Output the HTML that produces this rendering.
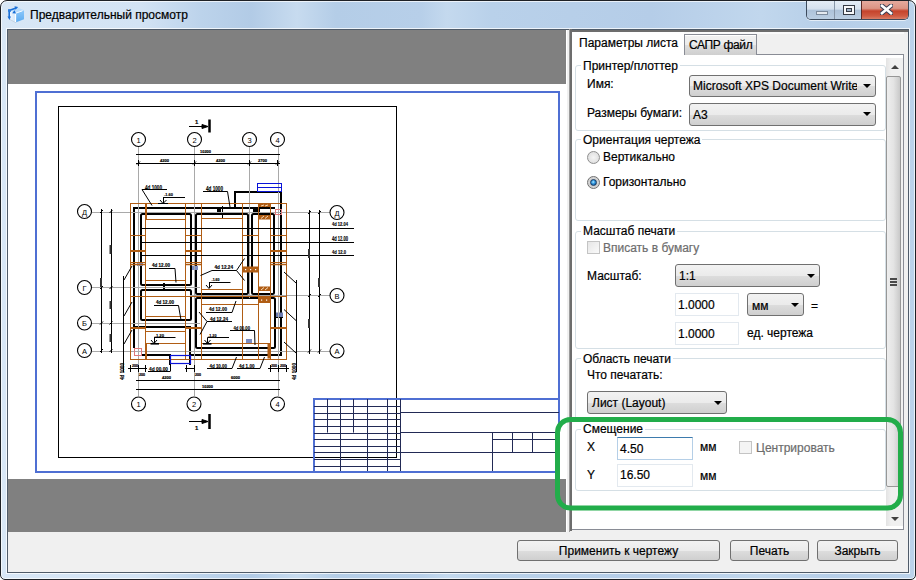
<!DOCTYPE html>
<html><head><meta charset="utf-8">
<style>
*{box-sizing:border-box;margin:0;padding:0}
html,body{width:916px;height:580px;overflow:hidden;background:#fff}
body{font-family:"Liberation Sans",sans-serif;font-size:12px;color:#000;position:relative}
.abs{position:absolute}
#win{position:absolute;left:0;top:0;width:916px;height:580px;border:1px solid #1e2126;border-radius:7px 7px 5px 5px;box-shadow:inset 0 0 0 1px rgba(255,255,255,0.7);
 background:linear-gradient(90deg,#d8e7f6 0px,#d3e3f4 140px,#bcd3eb 200px,#b2cbe6 250px,#c7dbef 296px,#b4cde7 335px,#b7cfe9 420px,#c4d9ee 446px,#b9d1ea 490px,#b5cde8 650px,#c1d7ed 760px,#b6cee8 830px,#bcd3eb 916px);overflow:hidden}
#client{position:absolute;left:7px;top:29px;width:902px;height:544px;border:1px solid #4f5b69;background:#f0f0f0;box-shadow:0 0 0 1px rgba(255,255,255,0.75)}
.title{position:absolute;left:29px;top:7px;font-size:12px;color:#000;letter-spacing:0;-webkit-text-stroke:0.2px #000;white-space:nowrap}
.t{position:absolute;white-space:nowrap;line-height:14px;-webkit-text-stroke:0.2px currentColor}
.combo{position:absolute;border:1px solid #707070;border-radius:3px;background:linear-gradient(#f2f2f2 0%,#ebebeb 50%,#dddddd 51%,#cfcfcf 100%)}
.combo .arr{position:absolute;right:4px;top:8px;width:0;height:0;border-left:4px solid transparent;border-right:4px solid transparent;border-top:4px solid #000}
.edit{position:absolute;background:#fff;border:1px solid #abadb3;border-top-color:#abadb3}
.grp{position:absolute;border:1px solid #d5dfe5;border-radius:3px}
.btn{position:absolute;border:1px solid #707070;border-radius:3px;background:linear-gradient(#f2f2f2 0%,#ebebeb 50%,#dddddd 51%,#cfcfcf 100%);text-align:center}
</style></head><body>
<div id="win">
 <div class="title">Предварительный просмотр</div>
 <svg class="abs" style="left:-1px;top:-1px" width="30" height="28" viewBox="0 0 30 28">
  <defs><linearGradient id="cgl" x1="0" y1="0" x2="1" y2="0"><stop offset="0" stop-color="#f2f8ff"/><stop offset="1" stop-color="#cfe6fb"/></linearGradient>
  <linearGradient id="cgr" x1="0" y1="0" x2="0" y2="1"><stop offset="0" stop-color="#8cc8fb"/><stop offset="1" stop-color="#5aa9ef"/></linearGradient></defs>
  <path d="M9.5 19 L10.5 10 L15.5 13.3 L15.5 22.5 Z" fill="url(#cgl)"/>
  <path d="M15.5 13.3 L24 10.3 L24 19.2 L15.5 22.5 Z" fill="url(#cgr)"/>
  <path d="M10.5 10 L17.5 7.5 L24 10.3 L15.5 13.3 Z" fill="#b9dcfb"/>
  <path d="M15.5 13.3 L15.5 22" stroke="#fff" stroke-width="1.3"/>
  <path d="M15.5 13.3 L22.5 10.8" stroke="#fff" stroke-width="0.9"/>
  <path d="M15.5 22.5 L9.5 19.2" stroke="#b8c4d0" stroke-width="0.6"/>
  <path d="M9.2 10.5 L16 8" stroke="#1a6fd6" stroke-width="1.6"/>
  <path d="M9.2 10.5 L9.2 17.5" stroke="#1a6fd6" stroke-width="1.6"/>
  <path d="M14.5 6.2 L18.2 7 L15.5 9.8 Z" fill="#1a6fd6"/>
  <path d="M7.5 16.5 L9.4 20 L11 16.5 Z" fill="#1a6fd6"/>
  <path d="M12.2 13.3 L14.5 10.3 L16 13.6 Z" fill="#1a6fd6"/>
  <rect x="8" y="9.2" width="3" height="2.6" fill="#2a7ee0"/>
 </svg>
 <div class="abs" style="left:805px;top:-1px;width:103px;height:20px;border:1px solid #3c4a5c;border-top:none;border-radius:0 0 5px 5px;overflow:hidden;box-shadow:0 1px 0 rgba(255,255,255,0.6)">
  <div class="abs" style="left:0;top:0;width:28px;height:20px;background:linear-gradient(#e6eef7 0%,#d5e1ee 45%,#aec3da 52%,#bccfe3 100%);border-right:1px solid #8796a8"></div>
  <div class="abs" style="left:28px;top:0;width:27px;height:20px;background:linear-gradient(#e6eef7 0%,#d5e1ee 45%,#aec3da 52%,#bccfe3 100%);border-right:1px solid #5e2a25"></div>
  <div class="abs" style="left:55px;top:0;width:48px;height:20px;background:linear-gradient(#e7ada1 0%,#dc9484 42%,#c5432c 55%,#cf5b42 80%,#dd8a75 100%)"></div>
  <div class="abs" style="left:9px;top:11px;width:12px;height:4px;background:#e4e9ef;border:1px solid #7c8a9c"></div>
  <div class="abs" style="left:36px;top:5px;width:12px;height:10px;border:1px solid #353a44;background:#f7f8fa"></div>
  <div class="abs" style="left:39px;top:8px;width:6px;height:4px;background:#9fb2c8;border:1px solid #353a44"></div>
  <svg class="abs" style="left:73px;top:4px" width="13" height="11" viewBox="0 0 13 11"><path d="M2 1.8 L11 9.2 M11 1.8 L2 9.2" stroke="#3a3d52" stroke-width="4.6" stroke-linecap="square"/><path d="M2 1.8 L11 9.2 M11 1.8 L2 9.2" stroke="#ffffff" stroke-width="2.6" stroke-linecap="square"/></svg>
 </div>
</div>
<div id="client"></div>
<!-- preview -->
<div class="abs" style="left:8px;top:30px;width:558px;height:54px;background:#808080"></div>
<div class="abs" style="left:8px;top:84px;width:558px;height:395px;background:#fff"></div>
<div class="abs" style="left:8px;top:479px;width:558px;height:53px;background:#808080"></div>
<div class="abs" style="left:35px;top:91px;width:525px;height:382px;border:2px solid #4f6fd3"></div>
<div class="abs" style="left:58px;top:106px;width:339px;height:352px;border:1px solid #000"></div>
<svg class="abs" style="left:0;top:0" width="916" height="580"><path d="M134 348 L134 208 L275 208" stroke="#000" stroke-width="2" fill="none"/>
<path d="M235 208 L235 192 L281 192 L281 355 L191 355" stroke="#000" stroke-width="2" fill="none"/>
<path d="M141 355 L170 355 L170 365" stroke="#000" stroke-width="2" fill="none"/>
<rect x="141" y="214" width="50" height="71" stroke="#000" stroke-width="2" fill="none" rx="1.5"/>
<rect x="196" y="214" width="52" height="80" stroke="#000" stroke-width="2" fill="none" rx="1.5"/>
<rect x="252" y="214" width="22" height="80" stroke="#000" stroke-width="2" fill="none" rx="1.5"/>
<rect x="141" y="290" width="50" height="30" stroke="#000" stroke-width="2" fill="none" rx="1.5"/>
<path d="M134 327 L190 327 L190 365" stroke="#000" stroke-width="2" fill="none"/>
<rect x="196" y="298" width="79" height="50" stroke="#000" stroke-width="2" fill="none" rx="1.5"/>
<rect x="217" y="209" width="4" height="6" fill="#000"/>
<line x1="222.5" y1="206" x2="222.5" y2="218" stroke="#000" stroke-width="1"/>
<rect x="253" y="209" width="7" height="3" fill="#000"/>
<rect x="163" y="283" width="2" height="7" fill="#000"/>
<line x1="160" y1="287.5" x2="168" y2="287.5" stroke="#000" stroke-width="1"/>
<rect x="276" y="312.5" width="7" height="4.5" fill="#6b7bb0"/>
<line x1="275" y1="317.5" x2="283" y2="317.5" stroke="#000" stroke-width="1"/>
<rect x="137" y="262" width="6" height="4" fill="#7b8bc0"/>
<rect x="192" y="266" width="6" height="4" fill="#7b8bc0"/>
<rect x="246" y="339" width="6" height="4" fill="#7b8bc0"/>
<line x1="138.5" y1="147" x2="138.5" y2="396" stroke="#a9a9a9" stroke-width="1"/>
<line x1="194.5" y1="147" x2="194.5" y2="396" stroke="#a9a9a9" stroke-width="1"/>
<line x1="278.5" y1="147" x2="278.5" y2="396" stroke="#a9a9a9" stroke-width="1"/>
<line x1="249.5" y1="147" x2="249.5" y2="298" stroke="#a9a9a9" stroke-width="1"/>
<line x1="92" y1="212.5" x2="330" y2="212.5" stroke="#a9a9a9" stroke-width="1"/>
<line x1="92" y1="287.5" x2="200" y2="287.5" stroke="#a9a9a9" stroke-width="1"/>
<line x1="92" y1="323.5" x2="200" y2="323.5" stroke="#a9a9a9" stroke-width="1"/>
<line x1="92" y1="351.5" x2="330" y2="351.5" stroke="#a9a9a9" stroke-width="1"/>
<line x1="190" y1="295.5" x2="330" y2="295.5" stroke="#a9a9a9" stroke-width="1"/>
<rect x="130.5" y="203.5" width="156.0" height="156.0" stroke="#b05d14" stroke-width="1" fill="none" rx="0"/>
<line x1="145.5" y1="203.5" x2="145.5" y2="359" stroke="#b05d14" stroke-width="1"/>
<line x1="185.5" y1="203.5" x2="185.5" y2="359" stroke="#b05d14" stroke-width="1"/>
<line x1="201.5" y1="203.5" x2="201.5" y2="359" stroke="#b05d14" stroke-width="1"/>
<line x1="242.5" y1="203.5" x2="242.5" y2="359" stroke="#b05d14" stroke-width="1"/>
<line x1="258.5" y1="203.5" x2="258.5" y2="359" stroke="#b05d14" stroke-width="1"/>
<line x1="270.5" y1="203.5" x2="270.5" y2="359" stroke="#b05d14" stroke-width="1"/>
<line x1="146" y1="203.5" x2="146" y2="219.5" stroke="#b05d14" stroke-width="2"/>
<line x1="145.5" y1="219.5" x2="185.5" y2="219.5" stroke="#b05d14" stroke-width="1"/>
<line x1="201.5" y1="218.5" x2="242.5" y2="218.5" stroke="#b05d14" stroke-width="1"/>
<line x1="145.5" y1="280.5" x2="185.5" y2="280.5" stroke="#b05d14" stroke-width="1"/>
<line x1="201.5" y1="289.5" x2="242.5" y2="289.5" stroke="#b05d14" stroke-width="1"/>
<line x1="130.5" y1="296.5" x2="286.5" y2="296.5" stroke="#b05d14" stroke-width="1"/>
<line x1="145.5" y1="316.5" x2="185.5" y2="316.5" stroke="#b05d14" stroke-width="1"/>
<line x1="145.5" y1="331.5" x2="185.5" y2="331.5" stroke="#b05d14" stroke-width="1"/>
<line x1="145.5" y1="343.5" x2="185.5" y2="343.5" stroke="#b05d14" stroke-width="1"/>
<line x1="201.5" y1="304.5" x2="258.5" y2="304.5" stroke="#b05d14" stroke-width="1"/>
<line x1="201.5" y1="343.5" x2="270.5" y2="343.5" stroke="#b05d14" stroke-width="1"/>
<line x1="130.5" y1="235.5" x2="145.5" y2="235.5" stroke="#b05d14" stroke-width="1"/>
<line x1="130.5" y1="251" x2="145.5" y2="251" stroke="#b05d14" stroke-width="2"/>
<line x1="130.5" y1="262.5" x2="145.5" y2="262.5" stroke="#b05d14" stroke-width="1"/>
<line x1="130.5" y1="264.5" x2="145.5" y2="264.5" stroke="#b05d14" stroke-width="1.5"/>
<line x1="130.5" y1="328" x2="145.5" y2="328" stroke="#b05d14" stroke-width="2"/>
<line x1="185.5" y1="235.5" x2="201.5" y2="235.5" stroke="#b05d14" stroke-width="1"/>
<line x1="185.5" y1="251" x2="201.5" y2="251" stroke="#b05d14" stroke-width="2"/>
<line x1="185.5" y1="262.5" x2="201.5" y2="262.5" stroke="#b05d14" stroke-width="1"/>
<line x1="185.5" y1="264.5" x2="201.5" y2="264.5" stroke="#b05d14" stroke-width="1.5"/>
<line x1="185.5" y1="328" x2="201.5" y2="328" stroke="#b05d14" stroke-width="2"/>
<line x1="270.5" y1="235.5" x2="286.5" y2="235.5" stroke="#b05d14" stroke-width="1"/>
<line x1="270.5" y1="251" x2="286.5" y2="251" stroke="#b05d14" stroke-width="2"/>
<line x1="270.5" y1="262.5" x2="286.5" y2="262.5" stroke="#b05d14" stroke-width="1"/>
<line x1="270.5" y1="264.5" x2="286.5" y2="264.5" stroke="#b05d14" stroke-width="1.5"/>
<line x1="270.5" y1="328" x2="286.5" y2="328" stroke="#b05d14" stroke-width="2"/>
<line x1="242.5" y1="235.5" x2="258.5" y2="235.5" stroke="#b05d14" stroke-width="1"/>
<rect x="243" y="266.5" width="15" height="6" fill="#b05d14"/>
<rect x="245" y="269.0" width="1.2" height="1.2" fill="#fff"/>
<rect x="250" y="269.0" width="1.2" height="1.2" fill="#fff"/>
<rect x="255" y="269.0" width="1.2" height="1.2" fill="#fff"/>
<rect x="259" y="204" width="11" height="3" fill="#b05d14"/>
<line x1="261" y1="206" x2="264" y2="205" stroke="#f4d9b8" stroke-width="1"/>
<line x1="265" y1="206" x2="268" y2="205" stroke="#f4d9b8" stroke-width="1"/>
<rect x="259" y="215" width="11" height="4.5" fill="#b05d14"/>
<line x1="261" y1="218.5" x2="264" y2="216" stroke="#f4d9b8" stroke-width="1"/>
<line x1="265" y1="218.5" x2="268" y2="216" stroke="#f4d9b8" stroke-width="1"/>
<rect x="259" y="286.5" width="11" height="4.5" fill="#b05d14"/>
<line x1="261" y1="290.0" x2="264" y2="287.5" stroke="#f4d9b8" stroke-width="1"/>
<line x1="265" y1="290.0" x2="268" y2="287.5" stroke="#f4d9b8" stroke-width="1"/>
<rect x="259" y="297" width="11" height="6" fill="#b05d14"/>
<rect x="261" y="299.5" width="1.2" height="1.2" fill="#fff"/>
<rect x="266" y="299.5" width="1.2" height="1.2" fill="#fff"/>
<rect x="267.5" y="343.5" width="3" height="15" fill="#b05d14"/>
<line x1="146" y1="343.5" x2="146" y2="359" stroke="#b05d14" stroke-width="2"/>
<rect x="257.5" y="183.5" width="24.0" height="8.0" stroke="#0a14d8" stroke-width="1" fill="none" rx="0"/>
<line x1="257.5" y1="187.5" x2="281.5" y2="187.5" stroke="#0a14d8" stroke-width="1"/>
<rect x="170.5" y="355.5" width="20.0" height="8.0" stroke="#0a14d8" stroke-width="1.2" fill="none" rx="0"/>
<rect x="134.5" y="348.5" width="7.0" height="7.0" stroke="#e07a7a" stroke-width="1" fill="none" rx="0"/>
<rect x="275.5" y="209.5" width="6.0" height="5.0" stroke="#e07a7a" stroke-width="1" fill="none" rx="0"/>
<line x1="141" y1="228.5" x2="354" y2="228.5" stroke="#000" stroke-width="1"/>
<line x1="141" y1="242.5" x2="354" y2="242.5" stroke="#000" stroke-width="1"/>
<line x1="141" y1="255.5" x2="354" y2="255.5" stroke="#000" stroke-width="1"/>
<circle cx="138.5" cy="139.5" r="7" stroke="#000" stroke-width="1.1" fill="#fff"/>
<text x="138.5" y="142.5" font-size="7.5" text-anchor="middle" font-family="Liberation Sans" fill="#000">1</text>
<circle cx="194.5" cy="139.5" r="7" stroke="#000" stroke-width="1.1" fill="#fff"/>
<text x="194.5" y="142.5" font-size="7.5" text-anchor="middle" font-family="Liberation Sans" fill="#000">2</text>
<circle cx="249.5" cy="139.5" r="7" stroke="#000" stroke-width="1.1" fill="#fff"/>
<text x="249.5" y="142.5" font-size="7.5" text-anchor="middle" font-family="Liberation Sans" fill="#000">3</text>
<circle cx="277.5" cy="139.5" r="7" stroke="#000" stroke-width="1.1" fill="#fff"/>
<text x="277.5" y="142.5" font-size="7.5" text-anchor="middle" font-family="Liberation Sans" fill="#000">4</text>
<circle cx="84.5" cy="211.5" r="7" stroke="#000" stroke-width="1.1" fill="#fff"/>
<text x="84.5" y="214.5" font-size="7.5" text-anchor="middle" font-family="Liberation Sans" fill="#000">Д</text>
<circle cx="84.5" cy="287.5" r="7" stroke="#000" stroke-width="1.1" fill="#fff"/>
<text x="84.5" y="290.5" font-size="7.5" text-anchor="middle" font-family="Liberation Sans" fill="#000">Г</text>
<circle cx="84.5" cy="323" r="7" stroke="#000" stroke-width="1.1" fill="#fff"/>
<text x="84.5" y="326" font-size="7.5" text-anchor="middle" font-family="Liberation Sans" fill="#000">Б</text>
<circle cx="84.5" cy="350.5" r="7" stroke="#000" stroke-width="1.1" fill="#fff"/>
<text x="84.5" y="353.5" font-size="7.5" text-anchor="middle" font-family="Liberation Sans" fill="#000">А</text>
<circle cx="337" cy="212.5" r="7" stroke="#000" stroke-width="1.1" fill="#fff"/>
<text x="337" y="215.5" font-size="7.5" text-anchor="middle" font-family="Liberation Sans" fill="#000">Д</text>
<circle cx="337" cy="295.5" r="7" stroke="#000" stroke-width="1.1" fill="#fff"/>
<text x="337" y="298.5" font-size="7.5" text-anchor="middle" font-family="Liberation Sans" fill="#000">В</text>
<circle cx="337" cy="351" r="7" stroke="#000" stroke-width="1.1" fill="#fff"/>
<text x="337" y="354" font-size="7.5" text-anchor="middle" font-family="Liberation Sans" fill="#000">А</text>
<circle cx="138.5" cy="404" r="7" stroke="#000" stroke-width="1.1" fill="#fff"/>
<text x="138.5" y="407" font-size="7.5" text-anchor="middle" font-family="Liberation Sans" fill="#000">1</text>
<circle cx="194" cy="404" r="7" stroke="#000" stroke-width="1.1" fill="#fff"/>
<text x="194" y="407" font-size="7.5" text-anchor="middle" font-family="Liberation Sans" fill="#000">2</text>
<circle cx="277.5" cy="404" r="7" stroke="#000" stroke-width="1.1" fill="#fff"/>
<text x="277.5" y="407" font-size="7.5" text-anchor="middle" font-family="Liberation Sans" fill="#000">4</text>
<line x1="136" y1="154.5" x2="280" y2="154.5" stroke="#000" stroke-width="1"/>
<line x1="136" y1="163.5" x2="280" y2="163.5" stroke="#000" stroke-width="1"/>
<line x1="137.0" y1="164.5" x2="140.0" y2="161.5" stroke="#000" stroke-width="1"/>
<line x1="138.5" y1="160" x2="138.5" y2="166" stroke="#000" stroke-width="1"/>
<line x1="193.0" y1="164.5" x2="196.0" y2="161.5" stroke="#000" stroke-width="1"/>
<line x1="194.5" y1="160" x2="194.5" y2="166" stroke="#000" stroke-width="1"/>
<line x1="248.0" y1="164.5" x2="251.0" y2="161.5" stroke="#000" stroke-width="1"/>
<line x1="249.5" y1="160" x2="249.5" y2="166" stroke="#000" stroke-width="1"/>
<line x1="276.0" y1="164.5" x2="279.0" y2="161.5" stroke="#000" stroke-width="1"/>
<line x1="277.5" y1="160" x2="277.5" y2="166" stroke="#000" stroke-width="1"/>
<line x1="136" y1="380.5" x2="280" y2="380.5" stroke="#000" stroke-width="1"/>
<line x1="136" y1="389.5" x2="280" y2="389.5" stroke="#000" stroke-width="1"/>
<line x1="128" y1="368.5" x2="147" y2="368.5" stroke="#000" stroke-width="1"/>
<line x1="185" y1="368.5" x2="195" y2="368.5" stroke="#000" stroke-width="1"/>
<line x1="268" y1="368.5" x2="289" y2="368.5" stroke="#000" stroke-width="1"/>
<line x1="130.5" y1="365" x2="130.5" y2="372" stroke="#000" stroke-width="1"/>
<line x1="138.5" y1="365" x2="138.5" y2="372" stroke="#000" stroke-width="1"/>
<line x1="145.5" y1="365" x2="145.5" y2="372" stroke="#000" stroke-width="1"/>
<line x1="186.5" y1="365" x2="186.5" y2="372" stroke="#000" stroke-width="1"/>
<line x1="194.5" y1="365" x2="194.5" y2="372" stroke="#000" stroke-width="1"/>
<line x1="270.5" y1="365" x2="270.5" y2="372" stroke="#000" stroke-width="1"/>
<line x1="278.5" y1="365" x2="278.5" y2="372" stroke="#000" stroke-width="1"/>
<line x1="286.5" y1="365" x2="286.5" y2="372" stroke="#000" stroke-width="1"/>
<line x1="101.5" y1="209" x2="101.5" y2="353" stroke="#000" stroke-width="1"/>
<line x1="111.5" y1="209" x2="111.5" y2="353" stroke="#000" stroke-width="1"/>
<line x1="309.5" y1="210" x2="309.5" y2="354" stroke="#000" stroke-width="1"/>
<line x1="319.5" y1="210" x2="319.5" y2="354" stroke="#000" stroke-width="1"/>
<line x1="109.5" y1="213.0" x2="112.5" y2="210.0" stroke="#000" stroke-width="1"/>
<line x1="100" y1="213.0" x2="103" y2="210.0" stroke="#000" stroke-width="1"/>
<line x1="109.5" y1="289.0" x2="112.5" y2="286.0" stroke="#000" stroke-width="1"/>
<line x1="100" y1="289.0" x2="103" y2="286.0" stroke="#000" stroke-width="1"/>
<line x1="109.5" y1="324.5" x2="112.5" y2="321.5" stroke="#000" stroke-width="1"/>
<line x1="100" y1="324.5" x2="103" y2="321.5" stroke="#000" stroke-width="1"/>
<line x1="109.5" y1="352.0" x2="112.5" y2="349.0" stroke="#000" stroke-width="1"/>
<line x1="100" y1="352.0" x2="103" y2="349.0" stroke="#000" stroke-width="1"/>
<line x1="308" y1="214.0" x2="311" y2="211.0" stroke="#000" stroke-width="1"/>
<line x1="318" y1="214.0" x2="321" y2="211.0" stroke="#000" stroke-width="1"/>
<line x1="308" y1="297.0" x2="311" y2="294.0" stroke="#000" stroke-width="1"/>
<line x1="318" y1="297.0" x2="321" y2="294.0" stroke="#000" stroke-width="1"/>
<line x1="308" y1="352.5" x2="311" y2="349.5" stroke="#000" stroke-width="1"/>
<line x1="318" y1="352.5" x2="321" y2="349.5" stroke="#000" stroke-width="1"/>
<rect x="109.5" y="245" width="2" height="9" fill="#333"/>
<rect x="100" y="278" width="2" height="9" fill="#333"/>
<rect x="109.5" y="301" width="2" height="8" fill="#333"/>
<rect x="109.5" y="334" width="2" height="8" fill="#333"/>
<rect x="308" y="249" width="2" height="9" fill="#333"/>
<rect x="318" y="278" width="2" height="9" fill="#333"/>
<rect x="308" y="319" width="2" height="9" fill="#333"/>
<text x="200" y="152.5" font-size="3.6" font-weight="bold" text-anchor="start" font-family="Liberation Sans" fill="#000" stroke="#000" stroke-width="0.15" textLength="11" lengthAdjust="spacingAndGlyphs">10200</text>
<text x="160" y="161.5" font-size="3.6" font-weight="bold" text-anchor="start" font-family="Liberation Sans" fill="#000" stroke="#000" stroke-width="0.15" textLength="9" lengthAdjust="spacingAndGlyphs">4200</text>
<text x="216" y="161.5" font-size="3.6" font-weight="bold" text-anchor="start" font-family="Liberation Sans" fill="#000" stroke="#000" stroke-width="0.15" textLength="9" lengthAdjust="spacingAndGlyphs">4200</text>
<text x="258" y="161.5" font-size="3.6" font-weight="bold" text-anchor="start" font-family="Liberation Sans" fill="#000" stroke="#000" stroke-width="0.15" textLength="9" lengthAdjust="spacingAndGlyphs">2700</text>
<text x="162" y="379" font-size="3.6" font-weight="bold" text-anchor="start" font-family="Liberation Sans" fill="#000" stroke="#000" stroke-width="0.15" textLength="9" lengthAdjust="spacingAndGlyphs">4200</text>
<text x="231" y="379" font-size="3.6" font-weight="bold" text-anchor="start" font-family="Liberation Sans" fill="#000" stroke="#000" stroke-width="0.15" textLength="9" lengthAdjust="spacingAndGlyphs">6000</text>
<text x="202" y="388" font-size="3.6" font-weight="bold" text-anchor="start" font-family="Liberation Sans" fill="#000" stroke="#000" stroke-width="0.15" textLength="11" lengthAdjust="spacingAndGlyphs">10200</text>
<text x="132" y="367" font-size="3.2" font-weight="bold" text-anchor="start" font-family="Liberation Sans" fill="#000" stroke="#000" stroke-width="0.15" textLength="6" lengthAdjust="spacingAndGlyphs">200</text>
<text x="271" y="367" font-size="3.2" font-weight="bold" text-anchor="start" font-family="Liberation Sans" fill="#000" stroke="#000" stroke-width="0.15" textLength="6" lengthAdjust="spacingAndGlyphs">200</text>
<text x="280" y="367" font-size="3.2" font-weight="bold" text-anchor="start" font-family="Liberation Sans" fill="#000" stroke="#000" stroke-width="0.15" textLength="6" lengthAdjust="spacingAndGlyphs">200</text>
<text x="139" y="376" font-size="3.2" font-weight="bold" text-anchor="start" font-family="Liberation Sans" fill="#000" stroke="#000" stroke-width="0.15" textLength="6" lengthAdjust="spacingAndGlyphs">200</text>
<text x="195" y="376" font-size="3.2" font-weight="bold" text-anchor="start" font-family="Liberation Sans" fill="#000" stroke="#000" stroke-width="0.15" textLength="6" lengthAdjust="spacingAndGlyphs">200</text>
<text x="145" y="189.5" font-size="7.25" font-weight="bold" text-anchor="start" font-family="Liberation Sans" fill="#000" stroke="#000" stroke-width="0.15" textLength="17" lengthAdjust="spacingAndGlyphs">4d 1000</text>
<line x1="142" y1="189.5" x2="167" y2="189.5" stroke="#000" stroke-width="1"/>
<line x1="142" y1="189.5" x2="152" y2="205.5" stroke="#000" stroke-width="1"/>
<text x="164" y="196" font-size="4.35" font-weight="bold" text-anchor="start" font-family="Liberation Sans" fill="#000" stroke="#000" stroke-width="0.15" textLength="9" lengthAdjust="spacingAndGlyphs">-1.60</text>
<line x1="163" y1="197.5" x2="185" y2="197.5" stroke="#000" stroke-width="1"/>
<line x1="163.5" y1="197.5" x2="163.5" y2="203.5" stroke="#000" stroke-width="1"/>
<path d="M160 200 L163 203.5 L166.5 200" stroke="#000" stroke-width="1" fill="none"/>
<line x1="158" y1="203.5" x2="168" y2="203.5" stroke="#000" stroke-width="1"/>
<text x="206" y="191.2" font-size="6.8149999999999835" font-weight="bold" text-anchor="start" font-family="Liberation Sans" fill="#000" stroke="#000" stroke-width="0.15" textLength="17" lengthAdjust="spacingAndGlyphs">4d 1000</text>
<line x1="203" y1="191.5" x2="227.5" y2="191.5" stroke="#000" stroke-width="1"/>
<line x1="227.5" y1="191.5" x2="230" y2="207" stroke="#000" stroke-width="1"/>
<text x="152" y="267" font-size="5.075" font-weight="bold" text-anchor="start" font-family="Liberation Sans" fill="#000" stroke="#000" stroke-width="0.15" textLength="18" lengthAdjust="spacingAndGlyphs">4d 12.00</text>
<line x1="149" y1="268.5" x2="175" y2="268.5" stroke="#000" stroke-width="1"/>
<line x1="175" y1="268.5" x2="176" y2="282.5" stroke="#000" stroke-width="1"/>
<text x="214.5" y="269" font-size="5.075" font-weight="bold" text-anchor="start" font-family="Liberation Sans" fill="#000" stroke="#000" stroke-width="0.15" textLength="18.5" lengthAdjust="spacingAndGlyphs">4d 12.24</text>
<line x1="212" y1="270.5" x2="236.5" y2="270.5" stroke="#000" stroke-width="1"/>
<line x1="236.5" y1="270.5" x2="244.5" y2="258.5" stroke="#000" stroke-width="1"/>
<line x1="236.5" y1="270.5" x2="244.5" y2="280.5" stroke="#000" stroke-width="1"/>
<line x1="212" y1="270.5" x2="200.5" y2="275.5" stroke="#000" stroke-width="1"/>
<text x="211.5" y="281" font-size="3.625" font-weight="bold" text-anchor="start" font-family="Liberation Sans" fill="#000" stroke="#000" stroke-width="0.15" textLength="8.0" lengthAdjust="spacingAndGlyphs">-1.60</text>
<line x1="209" y1="282.5" x2="230.5" y2="282.5" stroke="#000" stroke-width="1"/>
<line x1="209.5" y1="282.5" x2="209.5" y2="288" stroke="#000" stroke-width="1"/>
<path d="M206 285 L209 288.5 L212 285" stroke="#000" stroke-width="1" fill="none"/>
<text x="156" y="304" font-size="5.075" font-weight="bold" text-anchor="start" font-family="Liberation Sans" fill="#000" stroke="#000" stroke-width="0.15" textLength="18" lengthAdjust="spacingAndGlyphs">4d 12.00</text>
<line x1="154" y1="305.5" x2="178.5" y2="305.5" stroke="#000" stroke-width="1"/>
<line x1="178.5" y1="305.5" x2="181" y2="320" stroke="#000" stroke-width="1"/>
<text x="209" y="310.8" font-size="5.510000000000017" font-weight="bold" text-anchor="start" font-family="Liberation Sans" fill="#000" stroke="#000" stroke-width="0.15" textLength="18" lengthAdjust="spacingAndGlyphs">4d 12.00</text>
<line x1="206" y1="312.5" x2="232" y2="312.5" stroke="#000" stroke-width="1"/>
<line x1="232" y1="312.5" x2="236" y2="301" stroke="#000" stroke-width="1"/>
<text x="210" y="320.8" font-size="5.220000000000033" font-weight="bold" text-anchor="start" font-family="Liberation Sans" fill="#000" stroke="#000" stroke-width="0.15" textLength="18" lengthAdjust="spacingAndGlyphs">4d 12.24</text>
<line x1="207" y1="321.5" x2="232" y2="321.5" stroke="#000" stroke-width="1"/>
<line x1="207" y1="321.5" x2="199" y2="312" stroke="#000" stroke-width="1"/>
<line x1="207" y1="321.5" x2="200" y2="334.5" stroke="#000" stroke-width="1"/>
<text x="233.5" y="329.5" font-size="5.8" font-weight="bold" text-anchor="start" font-family="Liberation Sans" fill="#000" stroke="#000" stroke-width="0.15" textLength="16.5" lengthAdjust="spacingAndGlyphs">4d 00.00</text>
<line x1="230" y1="330.5" x2="254.5" y2="330.5" stroke="#000" stroke-width="1"/>
<line x1="254.5" y1="330.5" x2="255" y2="345" stroke="#000" stroke-width="1"/>
<text x="154.5" y="336.5" font-size="4.35" font-weight="bold" text-anchor="start" font-family="Liberation Sans" fill="#000" stroke="#000" stroke-width="0.15" textLength="9.5" lengthAdjust="spacingAndGlyphs">-1.20</text>
<line x1="154" y1="337.5" x2="175.5" y2="337.5" stroke="#000" stroke-width="1"/>
<line x1="154.5" y1="337.5" x2="154.5" y2="343.5" stroke="#000" stroke-width="1"/>
<line x1="150.5" y1="343.8" x2="159" y2="343.8" stroke="#000" stroke-width="1.6"/>
<path d="M151 340 L154 343.5 L157 340" stroke="#000" stroke-width="1" fill="none"/>
<text x="208" y="336.5" font-size="4.35" font-weight="bold" text-anchor="start" font-family="Liberation Sans" fill="#000" stroke="#000" stroke-width="0.15" textLength="8.5" lengthAdjust="spacingAndGlyphs">-1.20</text>
<line x1="207.5" y1="337.5" x2="229" y2="337.5" stroke="#000" stroke-width="1"/>
<line x1="207.5" y1="337.5" x2="207.5" y2="343.5" stroke="#000" stroke-width="1"/>
<line x1="203" y1="343.8" x2="211.5" y2="343.8" stroke="#000" stroke-width="1.6"/>
<path d="M204.5 340 L207.5 343.5 L210.5 340" stroke="#000" stroke-width="1" fill="none"/>
<text x="149" y="370.5" font-size="5.8" font-weight="bold" text-anchor="start" font-family="Liberation Sans" fill="#000" stroke="#000" stroke-width="0.15" textLength="19" lengthAdjust="spacingAndGlyphs">4d 00.00</text>
<line x1="148" y1="371.5" x2="170" y2="371.5" stroke="#000" stroke-width="1"/>
<line x1="170.5" y1="371.5" x2="170.5" y2="364" stroke="#000" stroke-width="1"/>
<text x="209.5" y="367.6" font-size="5.945000000000033" font-weight="bold" text-anchor="start" font-family="Liberation Sans" fill="#000" stroke="#000" stroke-width="0.15" textLength="17.5" lengthAdjust="spacingAndGlyphs">4d 10.00</text>
<line x1="207" y1="368.5" x2="232" y2="368.5" stroke="#000" stroke-width="1"/>
<line x1="232" y1="368.5" x2="236.5" y2="357" stroke="#000" stroke-width="1"/>
<text x="239" y="367.6" font-size="5.945000000000033" font-weight="bold" text-anchor="start" font-family="Liberation Sans" fill="#000" stroke="#000" stroke-width="0.15" textLength="15.5" lengthAdjust="spacingAndGlyphs">4d 1.00</text>
<line x1="237" y1="368.5" x2="260" y2="368.5" stroke="#000" stroke-width="1"/>
<line x1="260" y1="368.5" x2="264.5" y2="357" stroke="#000" stroke-width="1"/>
<text x="332" y="226" font-size="5.8" font-weight="bold" text-anchor="start" font-family="Liberation Sans" fill="#000" stroke="#000" stroke-width="0.15" textLength="16" lengthAdjust="spacingAndGlyphs">4d 12.04</text>
<text x="332" y="240.5" font-size="6.5249999999999995" font-weight="bold" text-anchor="start" font-family="Liberation Sans" fill="#000" stroke="#000" stroke-width="0.15" textLength="16" lengthAdjust="spacingAndGlyphs">4d 12.00</text>
<text x="332" y="254" font-size="5.8" font-weight="bold" text-anchor="start" font-family="Liberation Sans" fill="#000" stroke="#000" stroke-width="0.15" textLength="14" lengthAdjust="spacingAndGlyphs">4d 12.0</text>
<text x="124" y="380" font-size="5.5" font-weight="bold" text-anchor="start" font-family="Liberation Sans" fill="#000" stroke="#000" stroke-width="0.15" transform="rotate(-90 124 380)" textLength="17" lengthAdjust="spacingAndGlyphs">4d 1000</text>
<text x="296" y="380" font-size="5.5" font-weight="bold" text-anchor="start" font-family="Liberation Sans" fill="#000" stroke="#000" stroke-width="0.15" transform="rotate(-90 296 380)" textLength="17" lengthAdjust="spacingAndGlyphs">4d 1000</text>
<line x1="132" y1="266" x2="124" y2="280" stroke="#000" stroke-width="1"/>
<line x1="132" y1="302" x2="124" y2="316" stroke="#000" stroke-width="1"/>
<line x1="132" y1="330" x2="124" y2="344" stroke="#000" stroke-width="1"/>
<line x1="284" y1="272" x2="296" y2="283" stroke="#000" stroke-width="1"/>
<line x1="284" y1="309.5" x2="296" y2="320.5" stroke="#000" stroke-width="1"/>
<line x1="284" y1="342" x2="296" y2="353" stroke="#000" stroke-width="1"/>
<line x1="123.5" y1="276" x2="123.5" y2="372" stroke="#000" stroke-width="1"/>
<line x1="296.5" y1="280" x2="296.5" y2="372" stroke="#000" stroke-width="1"/>
<line x1="189" y1="126.5" x2="207" y2="126.5" stroke="#000" stroke-width="1"/>
<path d="M202 124.5 L208 126.5 L202 128.5 Z" stroke="#000" stroke-width="1" fill="#000"/>
<line x1="209.5" y1="119.5" x2="209.5" y2="132.5" stroke="#000" stroke-width="2.5"/>
<text x="195" y="124" font-size="6" font-weight="bold" text-anchor="start" font-family="Liberation Sans" fill="#000" stroke="#000" stroke-width="0.15">1</text>
<line x1="189" y1="421.5" x2="207" y2="421.5" stroke="#000" stroke-width="1"/>
<path d="M202 419.5 L208 421.5 L202 423.5 Z" stroke="#000" stroke-width="1" fill="#000"/>
<line x1="209.5" y1="414" x2="209.5" y2="429" stroke="#000" stroke-width="2.5"/>
<text x="195" y="430" font-size="6" font-weight="bold" text-anchor="start" font-family="Liberation Sans" fill="#000" stroke="#000" stroke-width="0.15">1</text>
<line x1="313" y1="399" x2="559" y2="399" stroke="#4f6fd3" stroke-width="2"/>
<line x1="314" y1="399" x2="314" y2="471" stroke="#4f6fd3" stroke-width="2"/>
<line x1="314" y1="406.5" x2="400.5" y2="406.5" stroke="#222a55" stroke-width="1"/>
<line x1="314" y1="413.5" x2="400.5" y2="413.5" stroke="#222a55" stroke-width="1"/>
<line x1="314" y1="419.5" x2="400.5" y2="419.5" stroke="#222a55" stroke-width="1"/>
<line x1="314" y1="426.5" x2="400.5" y2="426.5" stroke="#222a55" stroke-width="1"/>
<line x1="314" y1="433.5" x2="400.5" y2="433.5" stroke="#222a55" stroke-width="1"/>
<line x1="314" y1="439.5" x2="400.5" y2="439.5" stroke="#222a55" stroke-width="1"/>
<line x1="314" y1="446.5" x2="400.5" y2="446.5" stroke="#222a55" stroke-width="1"/>
<line x1="314" y1="452.5" x2="400.5" y2="452.5" stroke="#222a55" stroke-width="1"/>
<line x1="314" y1="459.5" x2="400.5" y2="459.5" stroke="#222a55" stroke-width="1"/>
<line x1="314" y1="466.5" x2="400.5" y2="466.5" stroke="#222a55" stroke-width="1"/>
<line x1="340.5" y1="399" x2="340.5" y2="471" stroke="#222a55" stroke-width="1"/>
<line x1="367.5" y1="399" x2="367.5" y2="471" stroke="#222a55" stroke-width="1"/>
<line x1="387.5" y1="399" x2="387.5" y2="471" stroke="#222a55" stroke-width="1"/>
<line x1="400.5" y1="399" x2="400.5" y2="471" stroke="#222a55" stroke-width="1"/>
<line x1="327.5" y1="399" x2="327.5" y2="432.6" stroke="#222a55" stroke-width="1"/>
<line x1="353.5" y1="399" x2="353.5" y2="432.6" stroke="#222a55" stroke-width="1"/>
<line x1="400.5" y1="412.5" x2="559" y2="412.5" stroke="#222a55" stroke-width="1"/>
<line x1="400.5" y1="432.5" x2="559" y2="432.5" stroke="#222a55" stroke-width="1"/>
<line x1="400.5" y1="452.5" x2="559" y2="452.5" stroke="#222a55" stroke-width="1"/>
<line x1="492.5" y1="432.5" x2="492.5" y2="471" stroke="#222a55" stroke-width="1"/>
<line x1="492.5" y1="439.5" x2="559" y2="439.5" stroke="#222a55" stroke-width="1"/>
<line x1="512.5" y1="432.5" x2="512.5" y2="452.5" stroke="#222a55" stroke-width="1"/>
<line x1="532.5" y1="432.5" x2="532.5" y2="452.5" stroke="#222a55" stroke-width="1"/></svg>


<!-- right panel -->
<div class="abs" style="left:566px;top:30px;width:342px;height:502px;background:#f0f0f0"></div>
<div class="abs" style="left:566px;top:30px;width:1px;height:502px;background:#fff"></div>
<div class="abs" style="left:569px;top:30px;width:339px;height:2px;background:#6d6d6d"></div>
<div class="abs" style="left:569px;top:29px;width:1px;height:503px;background:#9a9a9a"></div>
<div class="abs" style="left:570px;top:29px;width:2px;height:502px;background:#6d6d6d"></div>
<!-- tab page -->
<div class="abs" style="left:572px;top:54px;width:332px;height:476px;background:#fff;border:1px solid #898c95;border-left:none"></div>
<!-- tabs -->
<div class="abs" style="left:684px;top:34px;width:73px;height:21px;border:1px solid #898c95;border-bottom:none;background:linear-gradient(#f2f2f2 0%,#ebebeb 50%,#dddddd 51%,#cfcfcf 100%)"></div>
<div class="abs" style="left:685px;top:35px;width:71px;height:1px;background:#fff"></div>
<div class="abs" style="left:572px;top:32px;width:112px;height:23px;background:#fff"></div>
<div class="abs" style="left:684px;top:32px;width:220px;height:2px;background:#fafafa"></div>
<div class="t" style="left:579px;top:36px">Параметры листа</div>
<div class="t" style="left:689px;top:38px;letter-spacing:-0.35px">САПР файл</div>

<!-- group 1 -->
<div class="grp" style="left:575px;top:65px;width:311px;height:66px"></div>
<div class="t" style="left:581px;top:59px;background:#fff;padding:0 2px">Принтер/плоттер</div>
<div class="t" style="left:587px;top:77px">Имя:</div>
<div class="combo" style="left:689px;top:75px;width:187px;height:22px"><div class="t" style="left:3px;top:3px;width:164px;overflow:hidden">Microsoft XPS Document Writer</div><div class="arr"></div></div>
<div class="t" style="left:587px;top:106px">Размеры бумаги:</div>
<div class="combo" style="left:689px;top:103px;width:187px;height:23px"><div class="t" style="left:3px;top:4px">A3</div><div class="arr"></div></div>

<!-- group 2 -->
<div class="grp" style="left:575px;top:139px;width:311px;height:82px"></div>
<div class="t" style="left:581px;top:133px;background:#fff;padding:0 2px">Ориентация чертежа</div>
<div class="abs" style="left:587px;top:151px;width:13px;height:13px;border-radius:50%;border:1px solid #8f8f8f;background:radial-gradient(circle at 50% 50%,#f4f4f4 0%,#e4e4e4 60%,#cfcfcf 100%)"></div>
<div class="t" style="left:603px;top:150px">Вертикально</div>
<div class="abs" style="left:587px;top:176px;width:13px;height:13px;border-radius:50%;border:1px solid #6f6f6f;background:radial-gradient(circle,#e8e8e8 0%,#d0d0d0 60%,#f2f2f2 100%)"></div>
<div class="abs" style="left:590px;top:179px;width:7px;height:7px;border-radius:50%;border:1px solid #173b63;background:radial-gradient(circle at 45% 40%,#b6ecff 0%,#3fa3e6 35%,#0f5aa0 80%)"></div>
<div class="t" style="left:603px;top:175px">Горизонтально</div>

<!-- group 3 -->
<div class="grp" style="left:575px;top:231px;width:311px;height:118px"></div>
<div class="t" style="left:581px;top:224px;background:#fff;padding:0 2px">Масштаб печати</div>
<div class="abs" style="left:587px;top:241px;width:13px;height:13px;border:1px solid #c4c4c4;background:linear-gradient(135deg,#e6e6e6,#fafafa)"></div>
<div class="t" style="left:603px;top:241px;color:#6d6d6d">Вписать в бумагу</div>
<div class="t" style="left:587px;top:269px">Масштаб:</div>
<div class="combo" style="left:675px;top:264px;width:145px;height:23px"><div class="t" style="left:3px;top:4px">1:1</div><div class="arr" style="top:9px"></div></div>
<div class="edit" style="left:675px;top:293px;width:64px;height:23px;border-color:#e3e9ef #e3e9ef #e3e9ef #e3e9ef"><div class="t" style="left:2px;top:4px">1.0000</div></div>
<div class="combo" style="left:747px;top:293px;width:57px;height:23px"><div class="t" style="left:4px;top:5px">мм</div><div class="arr" style="top:9px"></div></div>
<div class="t" style="left:811px;top:299px">=</div>
<div class="edit" style="left:675px;top:322px;width:64px;height:23px;border-color:#e3e9ef"><div class="t" style="left:2px;top:4px">1.0000</div></div>
<div class="t" style="left:747px;top:326px">ед. чертежа</div>

<!-- group 4 -->
<div class="grp" style="left:575px;top:358px;width:311px;height:64px"></div>
<div class="t" style="left:581px;top:352px;background:#fff;padding:0 2px">Область печати</div>
<div class="t" style="left:587px;top:368px">Что печатать:</div>
<div class="combo" style="left:587px;top:391px;width:140px;height:23px"><div class="t" style="left:4px;top:4px">Лист (Layout)</div><div class="arr" style="top:9px"></div></div>

<!-- group 5 -->
<div class="grp" style="left:575px;top:429px;width:311px;height:62px"></div>
<div class="t" style="left:581px;top:422px;background:#fff;padding:0 2px">Смещение</div>
<div class="t" style="left:587px;top:440px">X</div>
<div class="edit" style="left:617px;top:437px;width:76px;height:23px;border-color:#3d7bad #b5cfe7 #b5cfe7 #b5cfe7"><div class="t" style="left:2px;top:4px">4.50</div></div>
<div class="t" style="left:700px;top:440px">мм</div>
<div class="abs" style="left:739px;top:441px;width:13px;height:13px;border:1px solid #c4c4c4;background:#f4f4f4"></div>
<div class="t" style="left:756px;top:441px;color:#6d6d6d">Центрировать</div>
<div class="t" style="left:587px;top:468px">Y</div>
<div class="edit" style="left:617px;top:464px;width:76px;height:23px;border-color:#e3e9ef"><div class="t" style="left:2px;top:3px">16.50</div></div>
<div class="t" style="left:700px;top:469px">мм</div>

<!-- scrollbar -->
<div class="abs" style="left:886px;top:58px;width:17px;height:468px;background:linear-gradient(90deg,#e3e3e3,#f0f0f0 30%,#f0f0f0)"></div>
<div class="abs" style="left:891px;top:65px;width:0;height:0;border-left:4px solid transparent;border-right:4px solid transparent;border-bottom:4px solid #404040"></div>
<div class="abs" style="left:891px;top:517px;width:0;height:0;border-left:4px solid transparent;border-right:4px solid transparent;border-top:4px solid #404040"></div>
<div class="abs" style="left:886px;top:76px;width:15px;height:411px;border:1px solid #979797;border-radius:2px;background:linear-gradient(90deg,#eeeeee 0%,#e4e4e4 50%,#c9c9c9 100%)"></div>
<div class="abs" style="left:890px;top:278px;width:7px;height:2px;background:#4a4a4a"></div>
<div class="abs" style="left:890px;top:281px;width:7px;height:2px;background:#4a4a4a"></div>
<div class="abs" style="left:890px;top:284px;width:7px;height:2px;background:#4a4a4a"></div>

<!-- green highlight -->
<svg class="abs" style="left:0;top:0" width="916" height="580"><rect x="557.5" y="419.5" width="343" height="88.5" rx="13" ry="13" fill="none" stroke="#22ad4a" stroke-width="5"/></svg>

<!-- buttons -->
<div class="btn" style="left:517px;top:540px;width:203px;height:21px"><div class="t" style="left:0;right:0;top:3px">Применить к чертежу</div></div>
<div class="btn" style="left:730px;top:540px;width:79px;height:21px"><div class="t" style="left:0;right:0;top:3px">Печать</div></div>
<div class="btn" style="left:817px;top:540px;width:81px;height:21px"><div class="t" style="left:0;right:0;top:3px">Закрыть</div></div>

</body></html>
